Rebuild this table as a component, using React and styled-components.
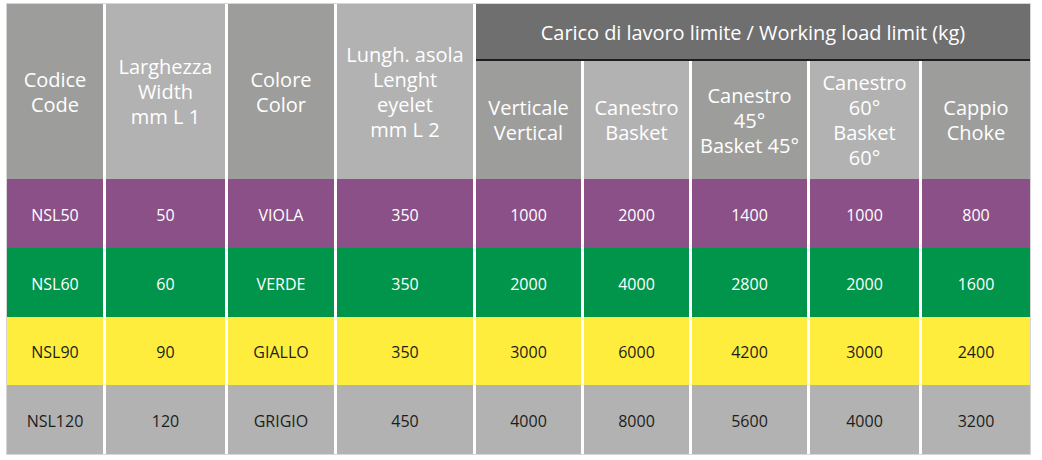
import React from 'react'
import styled, { createGlobalStyle } from 'styled-components'

const GlobalStyle = createGlobalStyle`
    body {
        margin: 0;
        background: #ffffff;
        font-family: "Open Sans", "Noto Sans", sans-serif;
    }
`

const Page = styled.div`
    padding: 3px 0 0 6px;
`

const Table = styled.div`
    display: grid;
    width: 1023px;
    grid-template-columns: 96px 119px 106px 136px 105px 105px 115px 109px 108px;
    grid-template-rows: 57px 118px repeat(4, 68.75px);
    column-gap: 3px;
    border: 1px solid #d6d6d6;
    background: #ffffff;
`

const HeadCell = styled.div`
    grid-row: span 2;
    display: flex;
    align-items: center;
    justify-content: center;
    text-align: center;
    background: ${p => (p.$light ? '#b2b2b2' : '#9d9d9c')};
    color: #ffffff;
    font-size: 20px;
    line-height: 25px;
`

const GroupTitle = styled.div`
    grid-column: span 5;
    display: flex;
    align-items: center;
    justify-content: center;
    background: #706f6f;
    border-bottom: 2px solid #1d1d1b;
    color: #ffffff;
    font-size: 20px;
    letter-spacing: -0.05px;
    padding-top: 1px;
`

const SubHead = styled(HeadCell)`
    grid-row: auto;
`

const rowColors = {
    viola: { bg: '#8b5087', fg: '#ffffff' },
    verde: { bg: '#00954a', fg: '#ffffff' },
    giallo: { bg: '#ffed3e', fg: '#1d1d1b' },
    grigio: { bg: '#b2b2b2', fg: '#1d1d1b' },
}

const DataCell = styled.div`
    display: flex;
    align-items: center;
    justify-content: center;
    padding-top: 3px;
    background: ${p => rowColors[p.$tone].bg};
    color: ${p => rowColors[p.$tone].fg};
    font-size: 16px;
`

const rows = [
    { tone: 'viola', values: ['NSL50', '50', 'VIOLA', '350', '1000', '2000', '1400', '1000', '800'] },
    { tone: 'verde', values: ['NSL60', '60', 'VERDE', '350', '2000', '4000', '2800', '2000', '1600'] },
    { tone: 'giallo', values: ['NSL90', '90', 'GIALLO', '350', '3000', '6000', '4200', '3000', '2400'] },
    { tone: 'grigio', values: ['NSL120', '120', 'GRIGIO', '450', '4000', '8000', '5600', '4000', '3200'] },
]

const App = () => {
    return (
        <Page>
            <GlobalStyle />
            <Table>
                <HeadCell>Codice<br />Code</HeadCell>
                <HeadCell $light>Larghezza<br />Width<br />mm L 1</HeadCell>
                <HeadCell>Colore<br />Color</HeadCell>
                <HeadCell $light>Lungh. asola<br />Lenght<br />eyelet<br />mm L 2</HeadCell>
                <GroupTitle>Carico di lavoro limite / Working load limit (kg)</GroupTitle>
                <SubHead>Verticale<br />Vertical</SubHead>
                <SubHead $light>Canestro<br />Basket</SubHead>
                <SubHead>Canestro<br />45°<br />Basket 45°</SubHead>
                <SubHead $light>Canestro<br />60°<br />Basket<br />60°</SubHead>
                <SubHead>Cappio<br />Choke</SubHead>
                {rows.map(row =>
                    row.values.map((v, i) => (
                        <DataCell key={row.tone + i} $tone={row.tone}>{v}</DataCell>
                    ))
                )}
            </Table>
        </Page>
    )
}

export default App
